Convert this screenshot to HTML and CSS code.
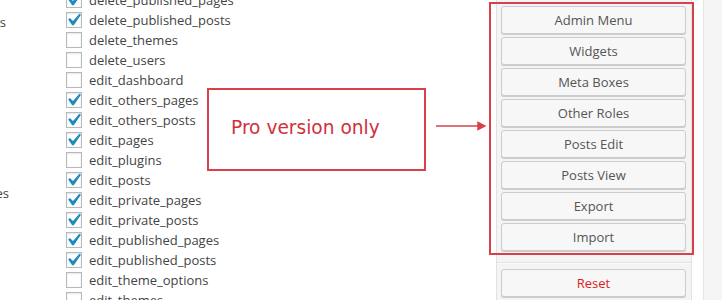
FILE: index.html
```html
<!DOCTYPE html>
<html lang="en">
<head>
    <meta charset="UTF-8">
    <meta name="viewport" content="width=device-width, initial-scale=1.0">
    <title>User Role Editor</title>
    <link rel="stylesheet" href="styles.css">
</head>
<body>
<div class="page">
    <div class="editor">
        <div class="groups">
            <div class="group-label first"><span>Posts</span></div>
            <div class="group-label second"><span>Pages</span></div>
        </div>
        <ul class="caps">
            <li><span class="cb on"><svg viewBox="4 3.5 13 13"><path d="M14.83 4.89l1.34.94-5.81 8.38H9.02L5.78 9.67l1.34-1.25 2.57 2.4z"/></svg></span>delete_published_pages</li>
            <li><span class="cb on"><svg viewBox="4 3.5 13 13"><path d="M14.83 4.89l1.34.94-5.81 8.38H9.02L5.78 9.67l1.34-1.25 2.57 2.4z"/></svg></span>delete_published_posts</li>
            <li><span class="cb"></span>delete_themes</li>
            <li><span class="cb"></span>delete_users</li>
            <li><span class="cb"></span>edit_dashboard</li>
            <li><span class="cb on"><svg viewBox="4 3.5 13 13"><path d="M14.83 4.89l1.34.94-5.81 8.38H9.02L5.78 9.67l1.34-1.25 2.57 2.4z"/></svg></span>edit_others_pages</li>
            <li><span class="cb on"><svg viewBox="4 3.5 13 13"><path d="M14.83 4.89l1.34.94-5.81 8.38H9.02L5.78 9.67l1.34-1.25 2.57 2.4z"/></svg></span>edit_others_posts</li>
            <li><span class="cb on"><svg viewBox="4 3.5 13 13"><path d="M14.83 4.89l1.34.94-5.81 8.38H9.02L5.78 9.67l1.34-1.25 2.57 2.4z"/></svg></span>edit_pages</li>
            <li><span class="cb"></span>edit_plugins</li>
            <li><span class="cb on"><svg viewBox="4 3.5 13 13"><path d="M14.83 4.89l1.34.94-5.81 8.38H9.02L5.78 9.67l1.34-1.25 2.57 2.4z"/></svg></span>edit_posts</li>
            <li><span class="cb on"><svg viewBox="4 3.5 13 13"><path d="M14.83 4.89l1.34.94-5.81 8.38H9.02L5.78 9.67l1.34-1.25 2.57 2.4z"/></svg></span>edit_private_pages</li>
            <li><span class="cb on"><svg viewBox="4 3.5 13 13"><path d="M14.83 4.89l1.34.94-5.81 8.38H9.02L5.78 9.67l1.34-1.25 2.57 2.4z"/></svg></span>edit_private_posts</li>
            <li><span class="cb on"><svg viewBox="4 3.5 13 13"><path d="M14.83 4.89l1.34.94-5.81 8.38H9.02L5.78 9.67l1.34-1.25 2.57 2.4z"/></svg></span>edit_published_pages</li>
            <li><span class="cb on"><svg viewBox="4 3.5 13 13"><path d="M14.83 4.89l1.34.94-5.81 8.38H9.02L5.78 9.67l1.34-1.25 2.57 2.4z"/></svg></span>edit_published_posts</li>
            <li><span class="cb"></span>edit_theme_options</li>
            <li><span class="cb"></span>edit_themes</li>
        </ul>
        <div class="pro-note">Pro version only</div>
        <svg class="pro-arrow" width="50" height="10" viewBox="0 0 50 10">
            <line x1="0" y1="5" x2="44" y2="5"/>
            <path d="M42 1.5 L49 5 L42 8.5 Z"/>
        </svg>
    </div>
    <div class="sidebar">
        <div class="pro-group">
            <div class="btn">Admin Menu</div>
            <div class="btn">Widgets</div>
            <div class="btn">Meta Boxes</div>
            <div class="btn">Other Roles</div>
            <div class="btn">Posts Edit</div>
            <div class="btn">Posts View</div>
            <div class="btn">Export</div>
            <div class="btn">Import</div>
        </div>
        <div class="sep"></div>
        <div class="btn reset">Reset</div>
    </div>
    <div class="rest"></div>
</div>
</body>
</html>
```

FILE: styles.css
```css
* {
    margin: 0;
    padding: 0;
    box-sizing: border-box;
}
body {
    font-family: 'Open Sans', 'Liberation Sans', sans-serif;
    font-size: 13px;
    color: #444;
    background: #fff;
}
.page {
    display: flex;
    height: 300px;
    overflow: hidden;
}
.editor {
    flex: 0 0 489px;
    display: flex;
    position: relative;
}
.groups {
    flex: 0 0 66px;
    overflow: hidden;
}
.group-label {
    display: flex;
    justify-content: flex-end;
    width: 6px;
    line-height: 20px;
    white-space: nowrap;
}
.group-label.first {
    margin-top: 12px;
}
.group-label.second {
    width: 9px;
    margin-top: 151px;
}
.caps {
    list-style: none;
    margin-top: -10px;
}
.caps li {
    display: flex;
    align-items: center;
    height: 20px;
    white-space: nowrap;
}
.cb {
    flex: 0 0 16px;
    width: 16px;
    height: 16px;
    margin-right: 7px;
    border: 1px solid #b4b9be;
    background: #fff;
    box-shadow: inset 0 1px 2px rgba(0,0,0,0.1);
    position: relative;
}
.cb svg {
    position: absolute;
    left: -1px;
    top: -1px;
    width: 16px;
    height: 16px;
    fill: #1e8cbe;
}
.pro-note {
    position: absolute;
    left: 207px;
    top: 88px;
    width: 219px;
    height: 83px;
    border: 2px solid #d8404b;
    background: #fff;
    color: #d0313d;
    font-family: 'DejaVu Sans', sans-serif;
    font-size: 18.6px;
    display: flex;
    align-items: center;
    padding: 0 0 5px 22px;
}
.pro-arrow {
    position: absolute;
    left: 436px;
    top: 121px;
    stroke: #d8404b;
    stroke-width: 1.5;
    fill: #d8404b;
}
.sidebar {
    flex: 0 0 196px;
    margin-left: 7px;
    padding: 0 5px 0 4px;
    background: #f3f4f3;
    border-left: 1px solid #e1e1e1;
    border-right: 1px solid #e1e1e1;
}
.pro-group {
    margin: 2px -8px 0 -12px;
    padding: 2px 6px 2px 10px;
    border: 2px solid #d8404b;
}
.btn {
    height: 28px;
    line-height: 26px;
    text-align: center;
    color: #555;
    background: #f7f7f7;
    border: 1px solid #ccc;
    border-radius: 3px;
    box-shadow: 0 1px 0 #ccc;
    margin-bottom: 3px;
    cursor: pointer;
}
.pro-group .btn:last-child {
    margin-bottom: 0;
}
.sep {
    margin: 7px -5px 0 -4px;
    border-top: 1px solid #e2e2e2;
    border-bottom: 1px solid #fafafa;
}
.btn.reset {
    margin-top: 5px;
    color: #e01e1e;
}
.rest {
    flex: 1;
    margin-left: 11px;
    background: #f5f5f5;
    border-left: 1px solid #e6e6e6;
}
```
